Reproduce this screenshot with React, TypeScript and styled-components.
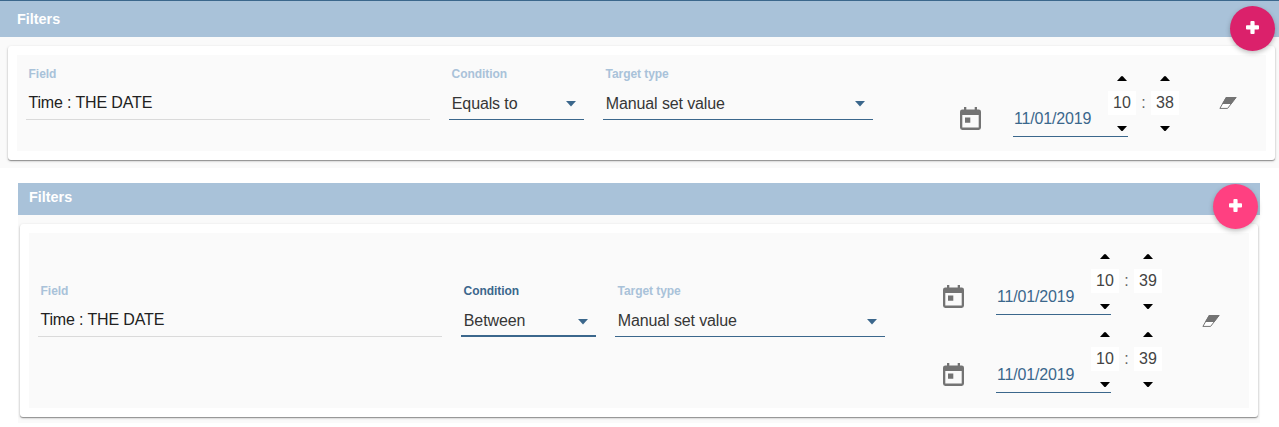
import React from "react";
import styled, { createGlobalStyle } from "styled-components";

const GlobalStyle = createGlobalStyle`
  * { box-sizing: border-box; }
  body {
    margin: 0;
    background: #fff;
    font-family: "Liberation Sans", Arial, sans-serif;
    overflow: hidden;
  }
`;

const Page = styled.main`
  display: flex;
  flex-direction: column;
  height: 423px;
`;

const MainPanel = styled.section`
  position: relative;
  height: 168px;
  background: #fafafa;
  border-top: 1px solid #3b678c;
`;

const NestedPanel = styled.section`
  position: relative;
  flex: 1;
  margin: 15px 19px 0 18px;
  background: #fafafa;
`;

const Header = styled.header<{ $height: number; $inset: number; $line: number }>`
  height: ${(p) => p.$height}px;
  padding-left: ${(p) => p.$inset}px;
  line-height: ${(p) => p.$line}px;
  background: #a9c2d9;
  color: #fff;
  font-size: 14.4px;
  font-weight: bold;
`;

const Card = styled.div<{ $margin: string }>`
  margin: ${(p) => p.$margin};
  padding: 9px;
  background: #fff;
  border-radius: 3px;
  box-shadow: 0 1px 3px rgba(0, 0, 0, 0.2), 0 1px 1px rgba(0, 0, 0, 0.24),
    0 1px 1px rgba(0, 0, 0, 0.12);
`;

const FilterRow = styled.div<{ $height: number }>`
  display: flex;
  align-items: center;
  height: ${(p) => p.$height}px;
  padding: 0 29px 0 9px;
  background: #fafafa;
`;

const Field = styled.div<{ $width: number }>`
  width: ${(p) => p.$width}px;
  height: 54px;
  margin: 0 19px 21px 0;
  flex: none;
`;

const Label = styled.div<{ $active?: boolean }>`
  height: 15px;
  padding-left: 2.6px;
  line-height: 16.6px;
  font-size: 12px;
  font-weight: bold;
  letter-spacing: -0.06px;
  color: ${(p) => (p.$active ? "#3b678c" : "#a9c2d9")};
`;

const ReadValue = styled.div`
  height: 39px;
  padding-left: 2.4px;
  line-height: 43px;
  font-size: 16px;
  letter-spacing: -0.14px;
  color: #212121;
  border-bottom: 1px solid #dadada;
`;

const SelectValue = styled.div<{ $active?: boolean }>`
  display: flex;
  justify-content: space-between;
  align-items: center;
  height: 39px;
  padding: ${(p) => (p.$active ? 9 : 8)}px 8.4px 0 2.8px;
  font-size: 16px;
  letter-spacing: -0.12px;
  color: #363636;
  border-bottom: ${(p) => (p.$active ? 2 : 1)}px solid #3b678c;
`;

const Dates = styled.div<{ $stacked: boolean }>`
  margin-left: auto;
  margin-bottom: ${(p) => (p.$stacked ? 1 : 0)}px;
`;

const DateRow = styled.div`
  display: flex;
  align-items: center;
  height: 78px;
`;

const CalendarIcon = styled.svg`
  width: 21px;
  height: 23px;
  margin: 31px 32px 0 0;
`;

const DateInput = styled.div`
  width: 115px;
  height: 36px;
  margin: 32px -20px 0 0;
  padding-left: 1px;
  line-height: 36px;
  font-size: 16px;
  letter-spacing: -0.17px;
  color: #3b678c;
  border-bottom: 1px solid #3b678c;
`;

const Spinner = styled.div`
  position: relative;
  display: flex;
  flex-direction: column;
  align-items: center;
  width: 28px;
  padding-top: 1px;
`;

const TimeBox = styled.div`
  width: 28px;
  height: 24px;
  margin: 10px 0 11px;
  background: #fff;
  color: #444;
  font-size: 16px;
  line-height: 24px;
  text-align: center;
`;

const Colon = styled.div`
  width: 15px;
  text-align: center;
  font-size: 16px;
  line-height: 22px;
  color: #666;
`;

const Arrow = styled.svg`
  display: block;
  width: 10px;
  height: 5px;
`;

const CaretIcon = styled.svg`
  width: 10px;
  height: 6px;
  margin-top: 1px;
`;

const Eraser = styled.svg`
  width: 18px;
  height: 12px;
  margin-left: 40px;
`;

const AddButton = styled.button<{ $color: string; $top: number; $right: number }>`
  position: absolute;
  top: ${(p) => p.$top}px;
  right: ${(p) => p.$right}px;
  display: flex;
  align-items: center;
  justify-content: center;
  width: 45px;
  height: 45px;
  padding: 0 0 2px;
  border: 0;
  border-radius: 50%;
  background: ${(p) => p.$color};
  box-shadow: 0 2px 5px rgba(0, 0, 0, 0.26);
`;

const Plus = () => (
  <svg width="13" height="13" viewBox="0 0 13 13" fill="#fff">
    <rect x="0" y="4.2" width="13" height="4.2" rx="0.9" />
    <rect x="4.4" y="0" width="4.2" height="13" rx="0.9" />
  </svg>
);

const Caret = () => (
  <CaretIcon viewBox="0 0 10 6">
    <path d="M0 0h10L5 5.5z" fill="#3b678c" />
  </CaretIcon>
);

const TimeSpinner = ({ value }: { value: string }) => (
  <Spinner>
    <Arrow viewBox="0 0 10 5"><path d="M0 5L4 .6Q5 -.4 6 .6L10 5z" /></Arrow>
    <TimeBox>{value}</TimeBox>
    <Arrow viewBox="0 0 10 5"><path d="M0 0L4 4.4Q5 5.4 6 4.4L10 0z" /></Arrow>
  </Spinner>
);

const DateTime = ({ hour, minute }: { hour: string; minute: string }) => (
  <DateRow>
    <CalendarIcon viewBox="0 0 21 23">
      <path
        fill="#737373"
        fillRule="evenodd"
        d="M4 0h2.3v2.4h8.4V0H17v2.4h1.7A2.3 2.3 0 0 1 21 4.7v15.9a2.3 2.3 0 0 1-2.3 2.3H2.3A2.3 2.3 0 0 1 0 20.6V4.7a2.3 2.3 0 0 1 2.3-2.3H4zM2.3 8v12.6h16.4V8zM5 10.4h5.3v5.4H5z"
      />
    </CalendarIcon>
    <DateInput>11/01/2019</DateInput>
    <TimeSpinner value={hour} />
    <Colon>:</Colon>
    <TimeSpinner value={minute} />
  </DateRow>
);

interface FilterProps {
  height: number;
  condition: string;
  active?: boolean;
  times: [string, string][];
}

const Filter = ({ height, condition, active, times }: FilterProps) => (
  <FilterRow $height={height}>
    <Field $width={404}>
      <Label>Field</Label>
      <ReadValue>Time : THE DATE</ReadValue>
    </Field>
    <Field $width={135}>
      <Label $active={active}>Condition</Label>
      <SelectValue $active={active}>{condition}<Caret /></SelectValue>
    </Field>
    <Field $width={270}>
      <Label>Target type</Label>
      <SelectValue>Manual set value<Caret /></SelectValue>
    </Field>
    <Dates $stacked={times.length > 1}>
      {times.map(([hour, minute], i) => (
        <DateTime key={i} hour={hour} minute={minute} />
      ))}
    </Dates>
    <Eraser viewBox="0 0 18 12">
      <path d="M7.2.5h9.9L8.6 11.4H.9z" fill="#fff" stroke="#737373" strokeLinejoin="round" />
      <path d="M7 0h10.5l-5.2 7H3z" fill="#737373" />
    </Eraser>
  </FilterRow>
);

export default function App() {
  return (
    <Page>
      <GlobalStyle />
      <MainPanel>
        <Header $height={36} $inset={17} $line={37}>Filters</Header>
        <Card $margin="9px 4px 0 8px">
          <Filter height={96} condition="Equals to" times={[["10", "38"]]} />
        </Card>
        <AddButton $color="#db216b" $top={5} $right={4}><Plus /></AddButton>
      </MainPanel>
      <NestedPanel>
        <Header $height={32} $inset={11} $line={29}>Filters</Header>
        <Card $margin="9px 2px 0">
          <Filter height={175} condition="Between" active times={[["10", "39"], ["10", "39"]]} />
        </Card>
        <AddButton $color="#ff4081" $top={1} $right={2}><Plus /></AddButton>
      </NestedPanel>
    </Page>
  );
}
